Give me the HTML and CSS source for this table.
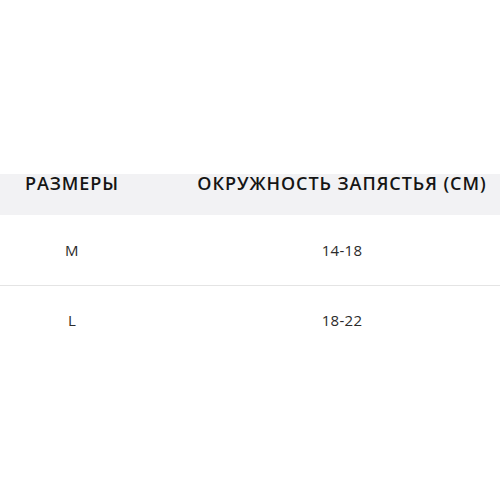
FILE: index.html
```html
<!DOCTYPE html>
<html lang="ru">
<head>
<meta charset="utf-8">
<link rel="stylesheet" href="styles.css">
</head>
<body>
<div class="page">
  <div class="table">
    <div class="row head">
      <div class="cell c1">РАЗМЕРЫ</div>
      <div class="cell c2">ОКРУЖНОСТЬ ЗАПЯСТЬЯ (СМ)</div>
    </div>
    <div class="row body-row sep">
      <div class="cell c1">M</div>
      <div class="cell c2">14-18</div>
    </div>
    <div class="row body-row last">
      <div class="cell c1">L</div>
      <div class="cell c2">18-22</div>
    </div>
  </div>
</div>
</body>
</html>
```
FILE: styles.css
```css
html, body {
  margin: 0;
  padding: 0;
  background: #ffffff;
}
.page {
  width: 500px;
  height: 500px;
  padding-top: 174px;
  box-sizing: border-box;
  font-family: "Open Sans", "Noto Sans", sans-serif;
}
.table {
  width: 500px;
}
.row {
  display: grid;
  grid-template-columns: 144px 356px;
}
.cell {
  text-align: center;
  white-space: nowrap;
}
.c2 {
  padding-left: 40px;
}
.head {
  background: #f2f2f4;
  height: 41px;
  color: #151515;
  font-weight: 600;
  font-size: 18px;
  letter-spacing: 0.95px;
  line-height: 18px;
  padding-top: 0;
  box-sizing: border-box;
}
.body-row {
  height: 70px;
  align-items: center;
  color: #2b2b2b;
  font-size: 15px;
  letter-spacing: 0.3px;
  box-sizing: border-box;
}
.sep {
  border-bottom: 1px solid #e4e4e4;
  height: 71px;
}
.last {
  padding-bottom: 3px;
}
```
